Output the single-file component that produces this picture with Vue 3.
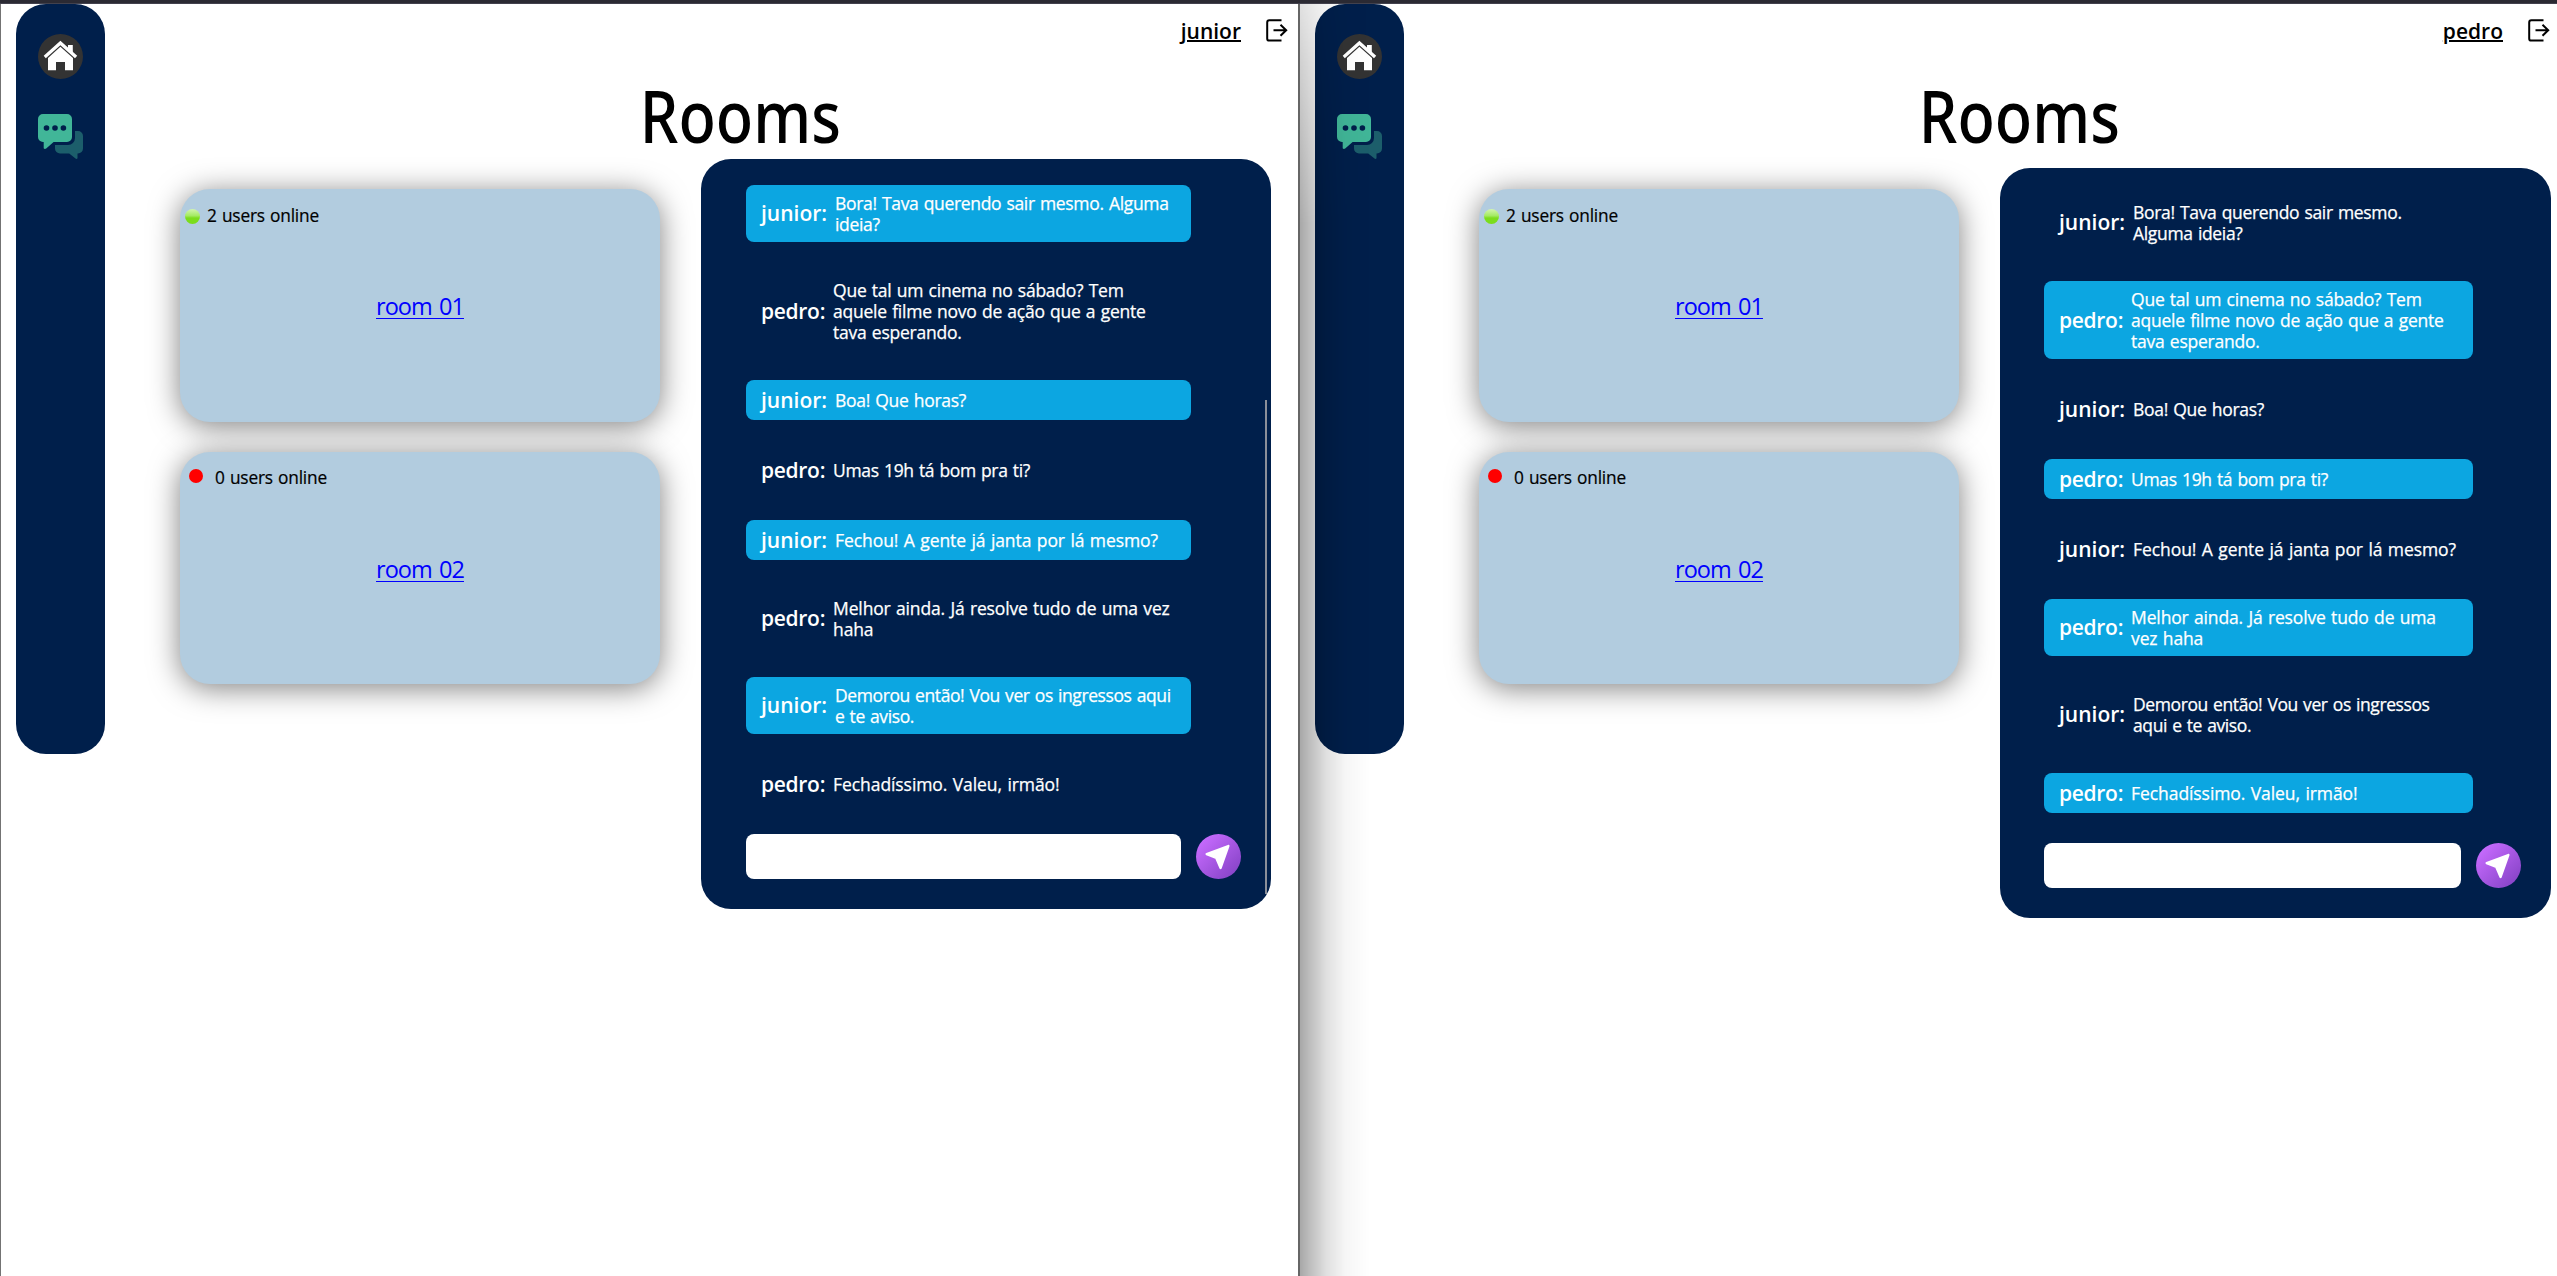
<script setup>
const conversation = [
  { from: 'junior', text: 'Bora! Tava querendo sair mesmo. Alguma ideia?', tracking: -0.33 },
  { from: 'pedro', text: 'Que tal um cinema no sábado? Tem aquele filme novo de ação que a gente tava esperando.', tracking: -0.24 },
  { from: 'junior', text: 'Boa! Que horas?', tracking: -0.3 },
  { from: 'pedro', text: 'Umas 19h tá bom pra ti?', tracking: -0.34 },
  { from: 'junior', text: 'Fechou! A gente já janta por lá mesmo?', tracking: -0.08 },
  { from: 'pedro', text: 'Melhor ainda. Já resolve tudo de uma vez haha', tracking: -0.15 },
  { from: 'junior', text: 'Demorou então! Vou ver os ingressos aqui e te aviso.', tracking: -0.4 },
  { from: 'pedro', text: 'Fechadíssimo. Valeu, irmão!', tracking: -0.08 },
]
const rooms = [
  { name: 'room 01', online: 2 },
  { name: 'room 02', online: 0 },
]
const windows = [{ user: 'junior' }, { user: 'pedro' }]
</script>

<template>
  <div class="desktop">
    <div class="strip"></div>
    <div class="windows">
      <section v-for="w in windows" :key="w.user" class="window" :class="w.user">
        <nav class="sidebar">
          <svg width="45" height="45" viewBox="0 0 45 45">
            <circle cx="22.5" cy="22.5" r="22.5" fill="#333" />
            <g fill="#fff">
              <path d="M30 11h4.8v8L30 14.6z" />
              <path d="M5.7 21.8 22.4 6.8 39.2 21.8 37 24.2 22.4 11.2 7.8 24.2z" />
              <path d="M22.4 12.8 35 24v12.2h-8V28h-9v8.2h-8V24z" />
            </g>
          </svg>
          <svg width="45" height="45" viewBox="0 0 45 45">
            <path fill="#1c5e6b" d="M37 17h3a5 5 0 0 1 5 5v12.4a5 5 0 0 1-5 5h-.5v4.8q-.7 1.3-2 .4l-6.3-5.2H22a5 5 0 0 1-5-5V31h13a7 7 0 0 0 7-7z" />
            <path fill="#41b698" d="M5 0h24a5 5 0 0 1 5 5v18a5 5 0 0 1-5 5H15.6l-7.4 6.5q-1.6 1-2.5-.3V28H5a5 5 0 0 1-5-5V5a5 5 0 0 1 5-5z" />
            <g fill="#001f4b"><circle cx="8.5" cy="14" r="2.8" /><circle cx="17" cy="14" r="2.8" /><circle cx="25.4" cy="14" r="2.8" /></g>
          </svg>
        </nav>
        <main class="content">
          <header class="account">
            <span class="user">{{ w.user }}</span>
            <svg width="22" height="23" viewBox="0 0 22 23" fill="none" stroke="#000" stroke-width="2">
              <path d="M15.5 1.2H3.4Q1.2 1.2 1.2 3.4V19.4Q1.2 21.6 3.4 21.6H15.5M7.5 11.2H20.4M14.5 5.8 20.2 11.2 14.5 16.8" />
            </svg>
          </header>
          <h1><span>Rooms</span></h1>
          <div class="columns">
            <div class="rooms">
              <article v-for="r in rooms" :key="r.name" class="room">
                <div class="presence" :class="{ empty: !r.online }"><i></i><span>{{ r.online }} users online</span></div>
                <a href="#">{{ r.name }}</a>
              </article>
            </div>
            <section class="chat">
              <div class="messages">
                <div v-for="m in conversation" :key="m.text" class="message" :class="{ own: m.from === w.user }">
                  <b :class="m.from">{{ m.from }}:</b>
                  <p :style="{ letterSpacing: m.tracking + 'px' }">{{ m.text }}</p>
                </div>
              </div>
              <form class="composer">
                <input type="text" />
                <svg width="45" height="45" viewBox="0 0 45 45">
                  <defs><linearGradient id="send" x1="0" y1="0" x2="1" y2="1"><stop offset=".1" stop-color="#c86cff" /><stop offset=".95" stop-color="#8341c4" /></linearGradient></defs>
                  <circle cx="22.5" cy="22.5" r="22.5" fill="url(#send)" />
                  <path d="M32.3 12 10.7 20.1 20.3 24 24.6 33.9z" fill="#fff" stroke="#fff" stroke-width="2.4" stroke-linejoin="round" />
                </svg>
              </form>
              <div v-if="w.user === 'junior'" class="scrollbar"></div>
            </section>
          </div>
        </main>
      </section>
    </div>
  </div>
</template>

<style>
html, body { margin: 0; background: #fff; overflow: hidden; }
</style>

<style scoped>
.desktop { width: 2557px; height: 1276px; overflow: hidden; font-family: "Open Sans", "Noto Sans", sans-serif; color: #000; }
.strip { height: 4px; box-sizing: border-box; background: #2b2a33; border-bottom: 1px solid #42414d; }
.windows { display: flex; height: 1272px; }
.window { position: relative; display: flex; box-sizing: border-box; padding-left: 15px; }
.window.junior { width: 1300px; border-left: 1px solid #737373; border-right: 2px solid #666; }
.window.pedro { width: 1257px; }
/* shadow cast by the window on the left */
.window.pedro::after {
  content: "";
  position: absolute;
  left: 0;
  top: 0;
  width: 70px;
  height: 100%;
  background: linear-gradient(90deg, rgba(0,0,0,.34), rgba(0,0,0,.25) 15%, rgba(0,0,0,.12) 38%, rgba(0,0,0,.035) 65%, transparent);
  mask-image: linear-gradient(rgba(0,0,0,.35), rgba(0,0,0,.55) 60px, #000 220px);
}
.sidebar { flex: none; width: 89px; height: 750px; border-radius: 30px; background: #001f4b; display: flex; flex-direction: column; align-items: center; gap: 35px; padding-top: 30px; box-sizing: border-box; }
.content { flex: 1; min-width: 0; }
.account { display: flex; justify-content: flex-end; align-items: flex-start; height: 70px; padding: 15px 10px 0 0; box-sizing: border-box; }
.pedro .account { padding-right: 7px; }
.user { font-size: 21px; line-height: 25px; font-weight: 600; text-decoration: underline; text-decoration-thickness: 2px; margin-right: 25px; }
h1 { margin: 0; padding-left: 77px; height: 85px; font: 500 72px/83px "Noto Sans", sans-serif; text-align: center; }
h1 span { display: inline-block; transform: scaleX(.85); }
.columns { display: flex; align-items: flex-start; padding-left: 75px; }
.rooms { flex: none; display: flex; flex-direction: column; gap: 30px; margin: 30px 41px 0 0; }
.room { box-sizing: border-box; width: 480px; height: 232.7px; border-radius: 30px; background: #b2ccdf; box-shadow: 0 4px 30px rgba(0,0,0,.5); display: flex; flex-direction: column; }
.presence { display: flex; align-items: center; height: 52px; padding-left: 5px; font-size: 17.3px; letter-spacing: -.2px; word-spacing: 1px; -webkit-text-stroke: .2px #000; }
.presence i { width: 15px; height: 15px; border-radius: 50%; background: linear-gradient(#d3f5b0, #a4ea63 45%, #7bdd1c 60%); margin: 2px 7px 0 0; }
.presence.empty { padding-left: 9px; }
.presence.empty i { width: 14px; height: 14px; background: #f00; margin: -4px 12px 0 0; }
.room a { align-self: center; margin-top: 49px; font-size: 23.5px; line-height: 32px; letter-spacing: -.95px; word-spacing: 2px; color: #00f; text-underline-offset: 3px; text-decoration-thickness: 1px; }
.chat { position: relative; flex: none; box-sizing: border-box; width: 570px; height: 750px; border-radius: 30px; background: #001f4b; color: #fff; padding: 26px 30px 30px 45px; }
.pedro .chat { width: 551px; margin-top: 9px; padding-left: 44px; }
.messages { display: flex; flex-direction: column; gap: 30px; width: 445px; }
.pedro .messages { width: 429px; }
.message { display: flex; align-items: center; gap: 8px; box-sizing: border-box; padding: 7.5px 15px; border-radius: 8px; }
.message b { flex: none; font-size: 21px; line-height: 25px; font-weight: 600; }
.message b.pedro { letter-spacing: -.3px; }
.message p { margin: 0; font-size: 17.5px; line-height: 21px; word-spacing: 1px; -webkit-text-stroke: .25px #fff; }
.own { background: #0ca6e1; }
.composer { display: flex; gap: 15px; margin-top: 30px; }
input { width: 435px; height: 45px; border: 0; border-radius: 8px; box-sizing: border-box; }
.pedro input { width: 417px; }
.scrollbar { position: absolute; width: 2px; left: 564px; top: 241px; height: 494px; background: #8b8f99; }
</style>
